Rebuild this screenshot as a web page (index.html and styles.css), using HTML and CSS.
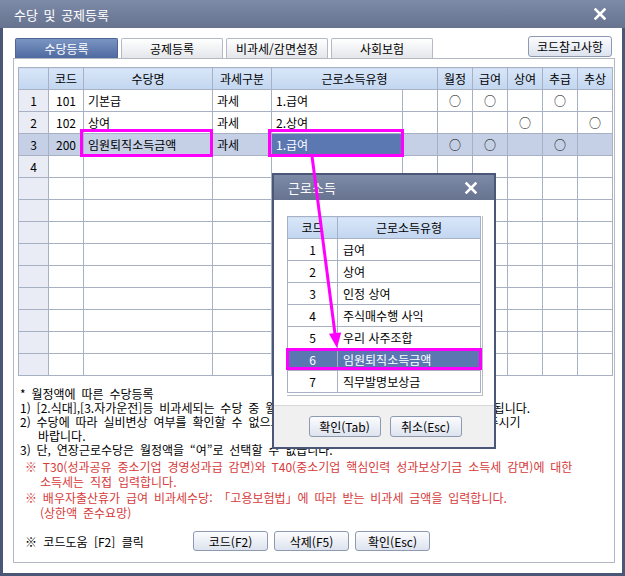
FILE: index.html
```html
<!DOCTYPE html>
<html lang="ko">
<head>
<meta charset="utf-8">
<title>수당 및 공제등록</title>
<link rel="stylesheet" href="styles.css">
</head>
<body>
<div class="window">
  <div class="titlebar">
    <span class="title">수당 및 공제등록</span>
    <svg class="close" width="12" height="12" viewBox="0 0 12 12"><path d="M1.5 1.5 L10.5 10.5 M10.5 1.5 L1.5 10.5" stroke="#fff" stroke-width="2.6" stroke-linecap="square"/></svg>
  </div>
  <div class="body">
    <div class="tabrow">
      <div class="tabs">
        <div class="tab active">수당등록</div>
        <div class="tab">공제등록</div>
        <div class="tab">비과세/감면설정</div>
        <div class="tab">사회보험</div>
      </div>
      <button class="btn refbtn">코드참고사항</button>
    </div>
    <div class="panel">
      <table class="grid">
        <colgroup>
          <col class="c-no"><col class="c-code"><col class="c-name"><col class="c-tax"><col class="c-type"><col class="c-blank">
          <col class="c-o"><col class="c-o"><col class="c-o"><col class="c-o"><col class="c-o">
        </colgroup>
        <thead>
          <tr><th></th><th>코드</th><th>수당명</th><th>과세구분</th><th colspan="2">근로소득유형</th><th>월정</th><th>급여</th><th>상여</th><th>추급</th><th>추상</th></tr>
        </thead>
        <tbody>
          <tr><td class="no">1</td><td class="ctr">101</td><td class="txt">기본급</td><td class="txt">과세</td><td class="txt">1.급여</td><td></td><td class="ctr">○</td><td class="ctr">○</td><td></td><td class="ctr">○</td><td></td></tr>
          <tr><td class="no">2</td><td class="ctr">102</td><td class="txt">상여</td><td class="txt">과세</td><td class="txt">2.상여</td><td></td><td></td><td></td><td class="ctr">○</td><td></td><td class="ctr">○</td></tr>
          <tr class="sel"><td class="no">3</td><td class="ctr">200</td><td class="txt">임원퇴직소득금액</td><td class="txt">과세</td><td class="txt cur">1.급여</td><td></td><td class="ctr">○</td><td class="ctr">○</td><td></td><td class="ctr">○</td><td></td></tr>
          <tr><td class="no">4</td><td></td><td></td><td></td><td></td><td></td><td></td><td></td><td></td><td></td><td></td></tr>
          <tr><td class="no"></td><td></td><td></td><td></td><td></td><td></td><td></td><td></td><td></td><td></td><td></td></tr>
          <tr><td class="no"></td><td></td><td></td><td></td><td></td><td></td><td></td><td></td><td></td><td></td><td></td></tr>
          <tr><td class="no"></td><td></td><td></td><td></td><td></td><td></td><td></td><td></td><td></td><td></td><td></td></tr>
          <tr><td class="no"></td><td></td><td></td><td></td><td></td><td></td><td></td><td></td><td></td><td></td><td></td></tr>
          <tr><td class="no"></td><td></td><td></td><td></td><td></td><td></td><td></td><td></td><td></td><td></td><td></td></tr>
          <tr><td class="no"></td><td></td><td></td><td></td><td></td><td></td><td></td><td></td><td></td><td></td><td></td></tr>
          <tr><td class="no"></td><td></td><td></td><td></td><td></td><td></td><td></td><td></td><td></td><td></td><td></td></tr>
          <tr><td class="no"></td><td></td><td></td><td></td><td></td><td></td><td></td><td></td><td></td><td></td><td></td></tr>
          <tr><td class="no"></td><td></td><td></td><td></td><td></td><td></td><td></td><td></td><td></td><td></td><td></td></tr>
        </tbody>
      </table>
      <div class="notes">
        <p>* 월정액에 따른 수당등록</p>
        <p>1) [2.식대],[3.자가운전]등 비과세되는 수당 중 월정액에 포함되는 수당은 “여”로 선택하면 됩니다.</p>
        <p>2) 수당에 따라 실비변상 여부를 확인할 수 없으므로 월정액 포함 여부를 반드시 선택하여주시기</p>
        <p class="ind">바랍니다.</p>
        <p>3) 단, 연장근로수당은 월정액을 “여”로 선택할 수 없습니다.</p>
      </div>
      <div class="warn">
        <p>※ T30(성과공유 중소기업 경영성과급 감면)와 T40(중소기업 핵심인력 성과보상기금 소득세 감면)에 대한</p>
        <p class="ind">소득세는 직접 입력합니다.</p>
        <p class="gap">※ 배우자출산휴가 급여 비과세수당: 「고용보험법」에 따라 받는 비과세 금액을 입력합니다.</p>
        <p class="ind">(상한액 준수요망)</p>
      </div>
      <div class="footer">
        <span class="help">※ 코드도움 [F2] 클릭</span>
        <div class="btns">
          <button class="btn fbtn">코드(F2)</button>
          <button class="btn fbtn">삭제(F5)</button>
          <button class="btn fbtn">확인(Esc)</button>
        </div>
      </div>
    </div>
  </div>

  <div class="popup">
    <div class="ptitle">
      <span class="title">근로소득</span>
      <svg class="close" width="12" height="12" viewBox="0 0 12 12"><path d="M1.5 1.5 L10.5 10.5 M10.5 1.5 L1.5 10.5" stroke="#fff" stroke-width="2.6" stroke-linecap="square"/></svg>
    </div>
    <div class="pbody">
      <div class="pwrap">
        <table class="ptable">
          <colgroup><col class="pc-code"><col class="pc-name"></colgroup>
          <thead><tr><th>코드</th><th>근로소득유형</th></tr></thead>
          <tbody>
            <tr><td class="ctr">1</td><td class="txt">급여</td></tr>
            <tr><td class="ctr">2</td><td class="txt">상여</td></tr>
            <tr><td class="ctr">3</td><td class="txt">인정 상여</td></tr>
            <tr><td class="ctr">4</td><td class="txt">주식매수행 사익</td></tr>
            <tr><td class="ctr">5</td><td class="txt">우리 사주조합</td></tr>
            <tr class="psel"><td class="ctr">6</td><td class="txt">임원퇴직소득금액</td></tr>
            <tr><td class="ctr">7</td><td class="txt">직무발명보상금</td></tr>
          </tbody>
        </table>
      </div>
    </div>
    <div class="pfoot">
      <button class="btn pbtn">확인(Tab)</button>
      <button class="btn pbtn">취소(Esc)</button>
    </div>
  </div>

  <div class="mark mark-name"></div>
  <div class="mark mark-type"></div>
  <div class="mark mark-row"></div>
  <svg class="arrow" width="625" height="576" viewBox="0 0 625 576">
    <line x1="312" y1="156" x2="335.3" y2="336" stroke="#ff00ff" stroke-width="3"/>
    <polygon points="337,348 329,333.8 341.2,332.4" fill="#ff00ff"/>
  </svg>
</div>
</body>
</html>
```

FILE: styles.css
```css
* { box-sizing: border-box; }
html, body { margin: 0; padding: 0; }
body {
  width: 625px;
  height: 576px;
  overflow: hidden;
  background: #4b5776;
  font-family: "Noto Sans CJK KR", "Noto Sans", sans-serif;
  font-size: 12px;
  color: #000;
}
p { margin: 0; }

.window {
  position: relative;
  width: 625px;
  height: 576px;
  background: #4b5776;
  padding: 0 3px 3px 3px;
  display: flex;
  flex-direction: column;
}

.titlebar {
  height: 28px;
  margin: 0 -3px;
  background: linear-gradient(#7c8aa8, #67738f);
  display: flex;
  align-items: center;
  justify-content: space-between;
  padding: 0 19px 0 14px;
}
.title {
  color: #fff;
  font-size: 13px;
  word-spacing: 2px;
}

.body {
  flex: 1;
  background: #fff;
  padding: 0 7px 10px 10px;
  display: flex;
  flex-direction: column;
}

.tabrow {
  height: 30px;
  display: flex;
  justify-content: space-between;
}
.tabs {
  display: flex;
  align-items: flex-end;
  gap: 3px;
  padding-left: 2px;
}
.tab {
  width: 102px;
  height: 20px;
  border: 1px solid #b4b9c3;
  border-bottom: none;
  border-radius: 2px 2px 0 0;
  background: linear-gradient(#ffffff, #e4e6ea);
  display: flex;
  align-items: center;
  justify-content: center;
  font-size: 12px;
}
.tab.active {
  width: 103px;
  background: linear-gradient(#7a94c2, #4f6aa0);
  border-color: #4d6597;
  color: #fff;
}

.btn {
  font-family: "Noto Sans CJK KR", "Noto Sans", sans-serif;
  font-size: 12px;
  color: #000;
  background: linear-gradient(#fbfcfe, #dde3ee);
  border: 1px solid #8e9ab2;
  border-radius: 3px;
  padding: 0;
  display: flex;
  align-items: center;
  justify-content: center;
}
.refbtn {
  width: 84px;
  height: 21px;
  margin-top: 8px;
  margin-right: 3px;
}

.panel {
  flex: 1;
  border: 1px solid #b3b8c3;
  padding: 8px 2px 0 4px;
  display: flex;
  flex-direction: column;
}

.grid {
  border-collapse: collapse;
  table-layout: fixed;
  width: 594px;
}
.grid th, .grid td {
  border: 1px solid #a8b0c3;
  height: 22px;
  padding: 0;
  font-weight: normal;
  white-space: nowrap;
  overflow: hidden;
}
.grid th {
  background: linear-gradient(#d8e6f8, #c2d6f0);
  text-align: center;
}
.c-no { width: 30px; }
.c-code { width: 35px; }
.c-name { width: 129px; }
.c-tax { width: 59px; }
.c-type { width: 131px; }
.c-blank { width: 35px; }
.c-o { width: 35px; }

.grid td.no {
  background: #e9ecf4;
  text-align: center;
}
.ctr { text-align: center; }
.txt { text-align: left; padding-left: 4px !important; }
.grid tr.sel td { background: #c5d0e6; }
.grid tr.sel td.cur { background: #5c78b2; color: #fff; }

.notes {
  margin-top: 11px;
  padding-left: 2px;
  line-height: 14px;
  word-spacing: 2.5px;
  white-space: nowrap;
}
.notes .ind { padding-left: 18px; }

.warn {
  margin-top: 2px;
  padding-left: 7px;
  line-height: 15px;
  color: #d63a3a;
  word-spacing: 2.5px;
  white-space: nowrap;
}
.warn .ind { padding-left: 15px; }
.warn .gap { margin-top: 1px; }

.footer {
  margin-top: 11px;
  display: flex;
  align-items: center;
  padding-left: 7px;
}
.help {
  width: 168px;
  word-spacing: 3px;
}
.btns {
  display: flex;
  gap: 6px;
}
.fbtn {
  width: 75px;
  height: 20px;
}

/* popup */
.popup {
  position: absolute;
  left: 272px;
  top: 173px;
  width: 224px;
  height: 276px;
  border: 2px solid #4b5776;
  background: #fff;
  display: flex;
  flex-direction: column;
}
.ptitle {
  height: 25px;
  background: linear-gradient(#7c8aa8, #67738f);
  display: flex;
  align-items: center;
  justify-content: space-between;
  padding: 0 17px 0 14px;
}
.ptitle .title { font-size: 13px; }
.pbody {
  flex: 1;
  padding: 16px 0 0 13px;
}
.pwrap {
  width: 196px;
  padding: 0 2px 2px 0;
  border-right: 1px solid #b8bdc8;
  border-bottom: 1px solid #b8bdc8;
}
.ptable {
  border-collapse: collapse;
  table-layout: fixed;
  width: 193px;
}
.pc-code { width: 50px; }
.pc-name { width: 143px; }
.ptable th, .ptable td {
  border: 1px solid #a8b0c3;
  height: 22px;
  padding: 0;
  font-weight: normal;
  white-space: nowrap;
}
.ptable th {
  background: linear-gradient(#d8e6f8, #c2d6f0);
  text-align: center;
}
.ptable td.txt { padding-left: 5px !important; }
.ptable tr.psel td { background: #5b77b1; color: #fff; }

.pfoot {
  height: 42px;
  background: #f0f0f0;
  border-top: 1px solid #d8d8d8;
  display: flex;
  justify-content: center;
  gap: 9px;
  padding-top: 10px;
  padding-left: 2px;
}
.pbtn {
  width: 72px;
  height: 21px;
}

/* annotations */
.mark {
  position: absolute;
  border: 3px solid #ff00ff;
}
.mark-name { left: 80px; top: 129px; width: 133px; height: 28px; }
.mark-type { left: 268px; top: 129px; width: 136px; height: 28px; }
.mark-row { left: 286px; top: 348px; width: 196px; height: 22px; }
.arrow {
  position: absolute;
  left: 0;
  top: 0;
  pointer-events: none;
}
```
